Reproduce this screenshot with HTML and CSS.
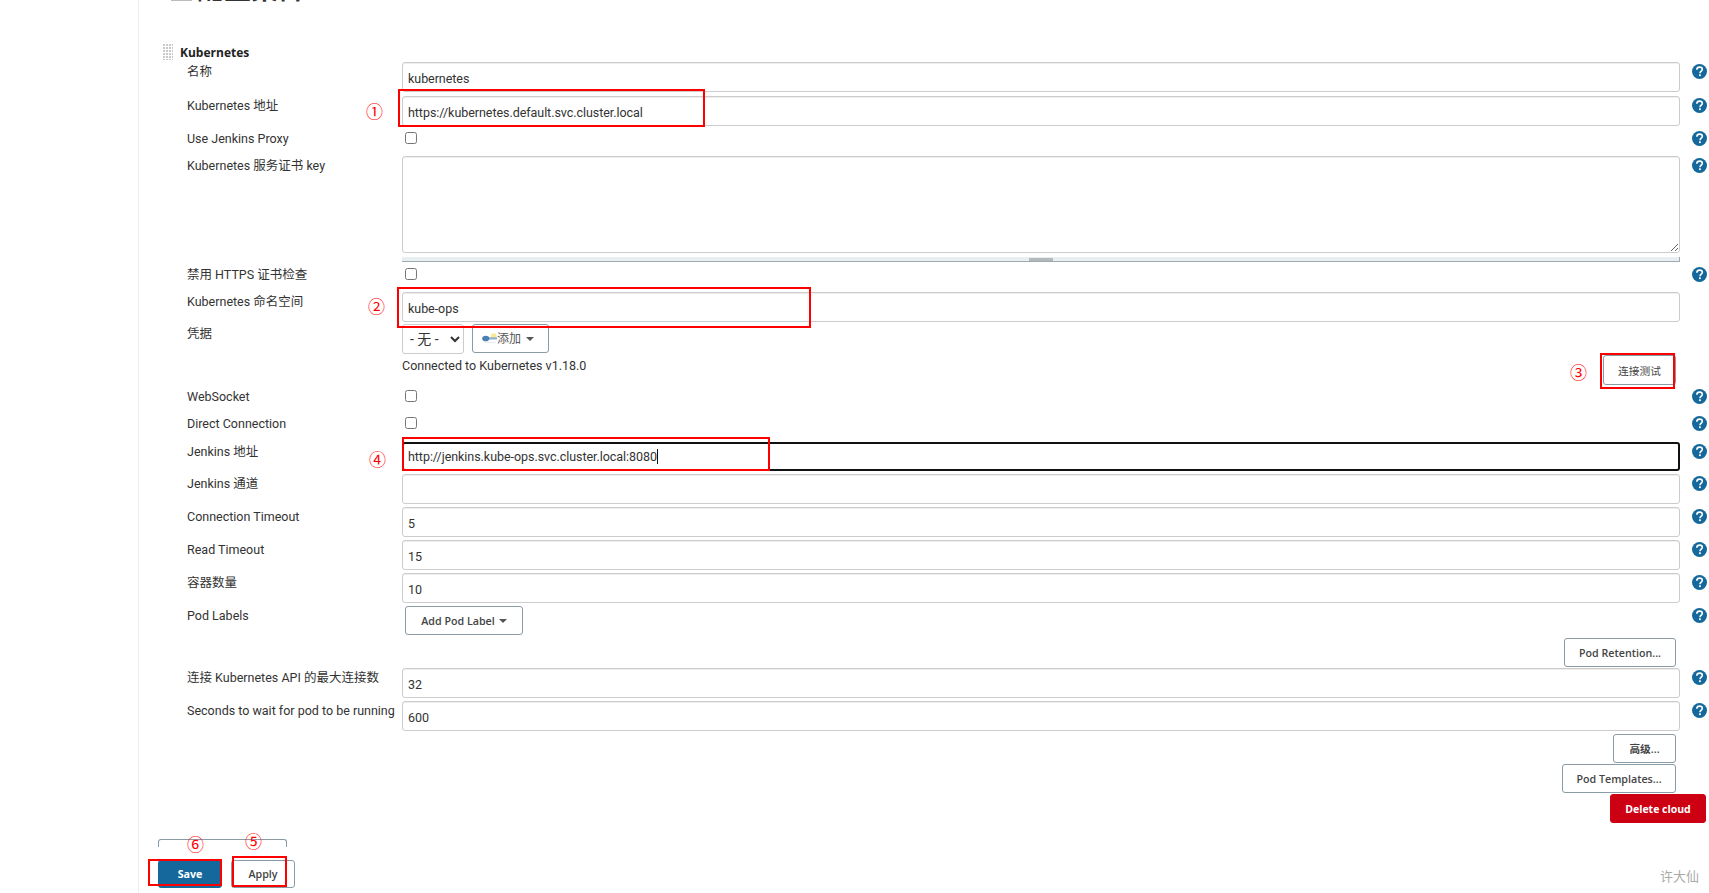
FILE: index.html
```html
<!DOCTYPE html>
<html lang="zh-CN">
<head>
<meta charset="utf-8">
<title>配置集群</title>
<link rel="stylesheet" href="styles.css">
</head>
<body>
<svg class="defs" width="0" height="0" aria-hidden="true">
  <symbol id="help" viewBox="0 0 16 16">
    <circle cx="8" cy="8" r="8" fill="#14689c"/>
    <path d="M5.1 6.1C5.2 4.3 6.4 3.3 8.1 3.3c1.7 0 2.9 1 2.9 2.4 0 1.1-.6 1.7-1.5 2.3-.7.5-.9.8-.9 1.5v.3" fill="none" stroke="#fff" stroke-width="1.7"/>
    <rect x="7.5" y="11" width="1.9" height="1.9" fill="#fff"/>
  </symbol>
</svg>
<main class="page">
  <div class="title"><span class="title-dash"></span><span class="title-text">配置集群</span></div>
  <div class="heading"><span class="handle"></span><b>Kubernetes</b></div>

  <div class="row h34"><label>名称</label><div class="field"><input class="text" value="kubernetes"></div><svg class="help"><use href="#help"/></svg></div>
  <div class="row h33"><label>Kubernetes 地址</label><div class="field"><input class="text" value="https://kubernetes.default.svc.cluster.local"></div><svg class="help"><use href="#help"/></svg></div>
  <div class="row h27"><label>Use Jenkins Proxy</label><div class="field"><input class="check" type="checkbox"></div><svg class="help"><use href="#help"/></svg></div>
  <div class="row h109"><label>Kubernetes 服务证书 key</label><div class="field"><textarea class="area"></textarea><div class="grippie"><span></span></div></div><svg class="help"><use href="#help"/></svg></div>
  <div class="row h27"><label>禁用 HTTPS 证书检查</label><div class="field"><input class="check" type="checkbox"></div><svg class="help"><use href="#help"/></svg></div>
  <div class="row h32"><label>Kubernetes 命名空间</label><div class="field"><input class="text" value="kube-ops"></div></div>
  <div class="row h63"><label>凭据</label>
    <div class="field">
      <div class="cred">
        <select class="select"><option>- 无 -</option></select>
        <button class="btn add" type="button">
          <svg class="key" viewBox="0 0 16 11"><circle cx="12.5" cy="3" r="3" fill="#f8ea90"/><rect x="5" y="4.2" width="11" height="2.4" fill="#8fb2d2"/><ellipse cx="4" cy="5.5" rx="3.8" ry="3" fill="#4a80b3"/><rect x="3" y="9" width="12" height="1" fill="#e4e8ec"/></svg>添加<i class="caret"></i>
        </button>
      </div>
      <div class="connected">Connected to Kubernetes v1.18.0</div>
      <button class="btn test" type="button">连接测试</button>
    </div>
  </div>
  <div class="row h27"><label>WebSocket</label><div class="field"><input class="check" type="checkbox"></div><svg class="help"><use href="#help"/></svg></div>
  <div class="row h28"><label>Direct Connection</label><div class="field"><input class="check" type="checkbox"></div><svg class="help"><use href="#help"/></svg></div>
  <div class="row h32"><label>Jenkins 地址</label><div class="field"><div class="text focused">http://jenkins.kube-ops.svc.cluster.local:8080<span class="cursor"></span></div></div><svg class="help"><use href="#help"/></svg></div>
  <div class="row h33"><label>Jenkins 通道</label><div class="field"><input class="text"></div><svg class="help"><use href="#help"/></svg></div>
  <div class="row h33"><label>Connection Timeout</label><div class="field"><input class="text" value="5"></div><svg class="help"><use href="#help"/></svg></div>
  <div class="row h33"><label>Read Timeout</label><div class="field"><input class="text" value="15"></div><svg class="help"><use href="#help"/></svg></div>
  <div class="row h33"><label>容器数量</label><div class="field"><input class="text" value="10"></div><svg class="help"><use href="#help"/></svg></div>
  <div class="row h32"><label>Pod Labels</label><div class="field"><button class="btn label-btn" type="button">Add Pod Label<i class="caret"></i></button></div><svg class="help"><use href="#help"/></svg></div>
  <div class="row h30"><div class="field right"><button class="btn retention" type="button">Pod Retention...</button></div></div>
  <div class="row h33"><label>连接 Kubernetes API 的最大连接数</label><div class="field"><input class="text" value="32"></div><svg class="help"><use href="#help"/></svg></div>
  <div class="row h33"><label>Seconds to wait for pod to be running</label><div class="field"><input class="text" value="600"></div><svg class="help"><use href="#help"/></svg></div>
  <div class="row h30"><div class="field right"><button class="btn advanced" type="button">高级...</button></div></div>
  <div class="row h30"><div class="field right"><button class="btn templates" type="button">Pod Templates...</button></div></div>
  <div class="row-delete"><button class="btn danger" type="button">Delete cloud</button></div>

  <div class="bracket"></div>
  <div class="actions">
    <button class="btn primary" type="button">Save</button>
    <button class="btn apply" type="button">Apply</button>
  </div>
</main>

<div class="mark box1"></div>
<div class="mark box2"></div>
<div class="mark box3"></div>
<div class="mark box4"></div>
<div class="mark box5"></div>
<div class="mark box6"></div>
<span class="num n1">①</span>
<span class="num n2">②</span>
<span class="num n3">③</span>
<span class="num n4">④</span>
<span class="num n5">⑤</span>
<span class="num n6">⑥</span>
<span class="watermark">许大仙</span>
</body>
</html>
```
FILE: styles.css
```css
* { box-sizing: border-box; }
html, body { margin: 0; height: 893px; overflow: hidden; background: #fff; }
body {
  position: relative;
  font: 12.5px/18px Roboto, "Noto Sans CJK SC", sans-serif;
  color: #333;
}
.defs { position: absolute; }
.page {
  height: 893px;
  margin-left: 138px;
  border-left: 1px solid #eee;
  padding-left: 48px;
}
.title {
  height: 4px;
  margin-left: -16px;
  overflow: hidden;
  position: relative;
}
.title-dash { position: absolute; left: 0; top: 0; width: 21px; height: 1px; background: #bbb; }
.title-text {
  position: absolute;
  left: 26px;
  bottom: -1px;
  line-height: 30px;
  font-size: 27px;
  font-weight: 700;
  color: #333;
  white-space: nowrap;
}
.heading {
  height: 58px;
  padding-top: 40px;
  margin-left: -24px;
  display: flex;
  align-items: flex-start;
  gap: 7px;
  font-family: "Open Sans", "Noto Sans CJK SC", sans-serif;
  font-size: 12px;
  color: #222;
}
.handle {
  width: 10px;
  height: 16px;
  background:
    linear-gradient(90deg, transparent 2px, #fff 2px) 0 0 / 3px 3px,
    linear-gradient(180deg, #c9c9c9 2px, #fff 2px) 0 0 / 3px 3px;
}
.row {
  display: flex;
  align-items: flex-start;
  width: 1560px;
}
.row label { width: 215px; flex: none; margin-top: 1px; white-space: nowrap; }
.row > .field:first-child { margin-left: 215px; }
.field { width: 1278px; flex: none; position: relative; }
.help { width: 15px; height: 15px; margin: 2px 0 0 12px; flex: none; }
.h27 { height: 27px; } .h28 { height: 28px; } .h30 { height: 30px; }
.h32 { height: 32px; } .h33 { height: 33px; } .h34 { height: 34px; }
.h63 { height: 63px; } .h109 { height: 109px; }

.text {
  display: block;
  width: 100%;
  height: 30px;
  padding: 3px 5px 0;
  font: inherit;
  letter-spacing: -0.05px;
  color: #333;
  background: #fff;
  border: 1px solid #ccc;
  border-radius: 3px;
  box-shadow: inset 0 1px 0 #eee;
  outline: none;
}
.focused {
  height: 29px;
  line-height: 26px;
  padding-top: 0;
  padding-left: 4px;
  border: 2px solid #111;
  box-shadow: none;
}
.cursor { display: inline-block; width: 1px; height: 15px; background: #111; vertical-align: -3px; }
.check {
  display: block;
  width: 12px;
  height: 12px;
  margin: 3px 0 0 3px;
}
.area {
  display: block;
  width: 100%;
  height: 97px;
  border: 1px solid #ccc;
  border-radius: 3px;
  box-shadow: inset 0 1px 0 #eee;
  outline: none;
}
.grippie {
  margin-top: 4px;
  height: 5px;
  background: #e9eef1;
  border-bottom: 1px solid #9aabb6;
  border-right: 1px solid #9aabb6;
  display: flex;
  justify-content: center;
}
.grippie span { width: 24px; height: 3px; margin-top: 1px; background: #b5b9bb; }

.btn {
  font: 600 10.7px/16px "Open Sans", "Noto Sans CJK SC", sans-serif;
  color: #444;
  background: #fff;
  border: 1px solid #8a9ba6;
  border-radius: 3px;
  padding: 0;
  height: 29px;
}
.caret {
  display: inline-block;
  margin-left: 4px;
  border: 4px solid transparent;
  border-top-color: #555;
  border-bottom-width: 0;
  vertical-align: 2px;
}
.cred { display: flex; gap: 8px; }
.select {
  width: 62px;
  height: 30px;
  font: 14px Roboto, "Noto Sans CJK SC", sans-serif;
  color: #333;
  background: #fff;
  border: 1px solid #ccc;
  border-radius: 3px;
  padding-left: 3px;
}
.add { width: 77px; height: 29px; color: #555; font-size: 12px; font-weight: 400; display: flex; align-items: center; justify-content: center; }
.add .key { margin-left: -5px; }
.key { width: 15px; height: 11px; }
.add .caret { margin-left: 5px; }
.connected { margin-top: 3px; line-height: 18px; }
.test {
  position: absolute;
  top: 31px;
  right: 4px;
  width: 73px;
  height: 30px;
  padding-top: 2px;
  font-weight: 400;
}
.label-btn { width: 118px; margin-left: 3px; }
.right { display: flex; justify-content: flex-end; padding-right: 4px; }
.retention { width: 112px; }
.advanced { width: 63px; }
.templates { width: 114px; }
.row-delete { width: 1519px; display: flex; justify-content: flex-end; }
.danger { width: 96px; background: #cc0012; border-color: #cc0012; color: #fff; font-size: 10.5px; font-weight: 700; }
.bracket {
  width: 129px;
  height: 8px;
  margin: 16px 0 0 -29px;
  border: 1px solid #8a9ba6;
  border-bottom: 0;
  border-radius: 3px 3px 0 0;
}
.actions { display: flex; gap: 9px; margin: 13px 0 0 -29px; }
.primary { width: 64px; height: 28px; background: #14689c; border-color: #14689c; color: #fff; font-weight: 700; }
.apply { width: 64px; height: 28px; }

.mark { position: absolute; border: 2px solid #f00; }
.box1 { left: 398px; top: 89px; width: 307px; height: 38px; }
.box2 { left: 397px; top: 287px; width: 414px; height: 41px; }
.box3 { left: 1600px; top: 353px; width: 75px; height: 36px; }
.box4 { left: 402px; top: 437px; width: 368px; height: 34px; }
.box5 { left: 232px; top: 856px; width: 55px; height: 31px; }
.box6 { left: 148px; top: 859px; width: 74px; height: 27px; }
.num { position: absolute; color: #f00; font: 17px/20px "Noto Sans CJK SC", sans-serif; }
.n1 { left: 366px; top: 101px; }
.n2 { left: 368px; top: 296px; }
.n3 { left: 1570px; top: 362px; }
.n4 { left: 369px; top: 449px; }
.n5 { left: 245px; top: 831px; }
.n6 { left: 187px; top: 834px; }
.watermark { position: absolute; left: 1660px; top: 867px; font-size: 13px; line-height: 20px; color: #aaa; }
```
